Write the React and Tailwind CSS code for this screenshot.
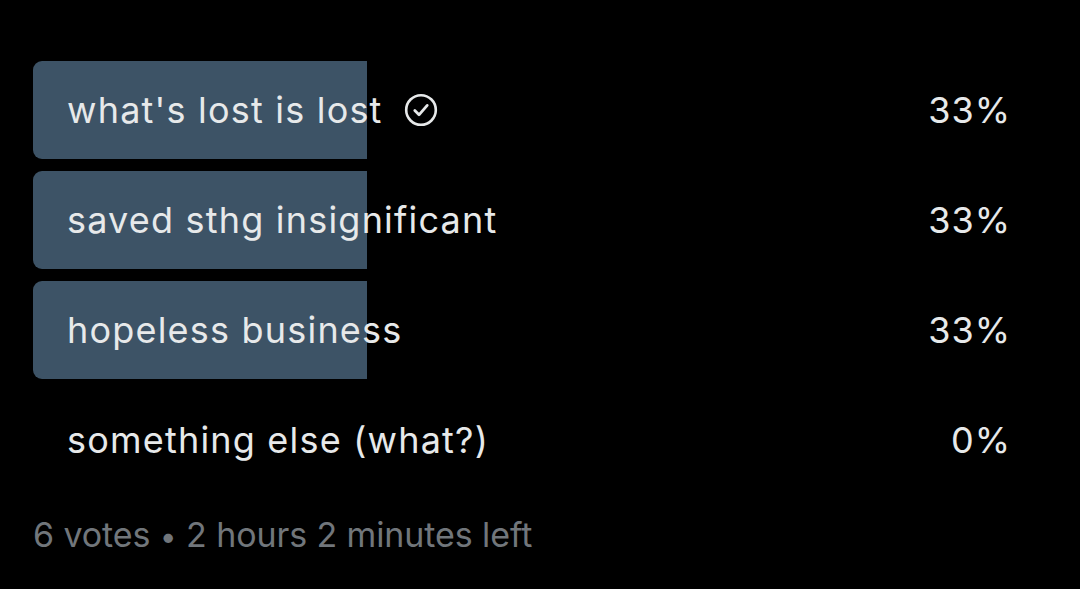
const options = [
  { label: "what's lost is lost", pct: 33, chosen: true },
  { label: 'saved sthg insignificant', pct: 33 },
  { label: 'hopeless business', pct: 33 },
  { label: 'something else (what?)', pct: 0 },
];

function CheckCircle() {
  return (
    <svg width="34" height="34" viewBox="0 0 34 34" fill="none" className="ml-[21px] shrink-0">
      <circle cx="17" cy="17" r="14.8" stroke="#e7e9ea" strokeWidth="2.6" />
      <path d="M10.8 17.6l4.2 4.2 8.2-9.4" stroke="#e7e9ea" strokeWidth="2.8" strokeLinecap="round" strokeLinejoin="round" />
    </svg>
  );
}

export default function App() {
  return (
    <div
      className="w-[1080px] h-[589px] overflow-hidden bg-black text-[#e7e9ea]"
      style={{ fontFamily: 'Inter, "Noto Sans", sans-serif' }}
    >
      <div className="pl-[33px] pr-[69px] pt-[61px]">
        <div className="flex flex-col gap-[12px]">
          {options.map((o) => (
            <div key={o.label} className="relative h-[98px] flex items-center">
              {o.pct > 0 && (
                <div className="absolute left-0 top-0 h-full w-[334px] bg-[#3d5366] rounded-l-[9px]" />
              )}
              <div className="relative flex-1 flex items-center pl-[34px] text-[36px] tracking-[1.2px]">
                <span>{o.label}</span>
                {o.chosen && <CheckCircle />}
              </div>
              <div className="relative text-[36px] tracking-[1px]">{o.pct}%</div>
            </div>
          ))}
        </div>
        <div className="mt-[20px] text-[34px] text-[#71767b] tracking-[-0.1px]">
          6 votes <span className="text-[30px]">•</span> 2 hours 2 minutes left
        </div>
      </div>
    </div>
  );
}
